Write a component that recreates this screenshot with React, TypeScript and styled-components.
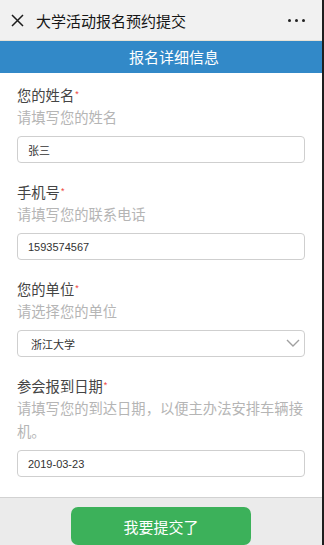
import styled, { createGlobalStyle } from 'styled-components'

const GlobalStyle = createGlobalStyle`
  * { box-sizing: border-box; }
  html, body {
    margin: 0;
    padding: 0;
    background: #ffffff;
  }
  body {
    font-family: "Liberation Sans", "Noto Sans CJK SC", sans-serif;
  }
`

interface IField {
  label: string;
  hint?: string;
  value?: string;
  kind?: 'text' | 'select';
}

const fields: IField[] = [
  { label: '您的姓名', hint: '请填写您的姓名', value: '张三' },
  { label: '手机号', hint: '请填写您的联系电话', value: '1593574567' },
  { label: '您的单位', hint: '请选择您的单位', value: '浙江大学', kind: 'select' },
  { label: '参会报到日期', hint: '请填写您的到达日期，以便主办法安排车辆接机。', value: '2019-03-23' },
  { label: '备注信息' },
]

const CloseIcon = () => (
  <svg width='13' height='13' viewBox='0 0 13 13'>
    <path d='M1 1 L12 12 M12 1 L1 12' stroke='#1c1c1c' strokeWidth='1.5' fill='none' />
  </svg>
)

const Chevron = () => (
  <svg width='14' height='8' viewBox='0 0 14 8'>
    <path d='M1 1 L7 7 L13 1' stroke='#a0a0a0' strokeWidth='1.4' fill='none' />
  </svg>
)

export default function App(): JSX.Element {
  return (<Page>
    <GlobalStyle />
    <Header>
      <CloseIcon />
      <Title>大学活动报名预约提交</Title>
      <Dots><i /><i /><i /></Dots>
    </Header>
    <Banner>报名详细信息</Banner>
    <Scroll>
      <Form>
        {fields.map((f) => (
          <Field key={f.label}>
            <Label>{f.label}<Star>*</Star></Label>
            {f.hint && <Hint>{f.hint}</Hint>}
            {f.value !== undefined && (f.kind === 'select'
              ? (<SelectWrap>
                <Input $select readOnly value={f.value} />
                <ChevronBox><Chevron /></ChevronBox>
              </SelectWrap>)
              : <Input readOnly value={f.value} />)}
          </Field>
        ))}
      </Form>
    </Scroll>
    <Footer>
      <Submit>我要提交了</Submit>
    </Footer>
  </Page>)
}

const Page = styled.div`
  height: 100vh;
  display: flex;
  flex-direction: column;
  border-right: 2px solid #1e1e1e;
  background: #ffffff;
  overflow: hidden;
`

const Header = styled.div`
  flex: none;
  height: 41px;
  display: flex;
  align-items: center;
  padding: 0 17px 0 11px;
  background: #f1f1f1;
  border-bottom: 1px solid #e6e1d6;
`

const Title = styled.div`
  margin-left: 12px;
  font-size: 15px;
  color: #161616;
  font-family: "Noto Sans CJK SC", sans-serif;
`

const Dots = styled.div`
  margin-left: auto;
  display: flex;
  gap: 4px;

  > i {
    width: 3px;
    height: 3px;
    border-radius: 50%;
    background: #222;
  }
`

const Banner = styled.div`
  flex: none;
  height: 32px;
  line-height: 32px;
  padding-left: 26px;
  text-align: center;
  background: #3289c8;
  color: #ffffff;
  font-size: 15px;
  font-family: "Noto Sans CJK SC", sans-serif;
`

const Scroll = styled.div`
  flex: 1;
  min-height: 0;
  overflow: hidden;
`

const Form = styled.div`
  padding: 11px 17px 0;
`

const Field = styled.div`
  margin-bottom: 18px;
`

const Label = styled.div`
  font-size: 14.3px;
  line-height: 20px;
  color: #444;
  font-family: "Noto Sans CJK SC", sans-serif;
`

const Star = styled.span`
  color: #ee3f3a;
  font-size: 9px;
  vertical-align: 4px;
  margin-left: 1px;
  font-family: "Liberation Sans", sans-serif;
`

const Hint = styled.div`
  font-size: 14.3px;
  line-height: 23px;
  color: #b5b5b5;
  font-family: "Noto Sans CJK SC", sans-serif;
`

const SelectWrap = styled.div`
  position: relative;
  margin-top: 8px;

  > input { margin-top: 0; }
`

const ChevronBox = styled.div`
  position: absolute;
  right: 5px;
  top: 9px;
  line-height: 0;
`

const Input = styled.input<{ $select?: boolean }>`
  display: block;
  width: 100%;
  height: 27px;
  margin-top: 8px;
  padding: 0 ${(p) => p.$select ? '26px 0 13px' : '10px'};
  border: 1px solid #cfcfcf;
  border-radius: 4px;
  background: #ffffff;
  color: #333;
  font-size: 11px;
  font-family: "Liberation Sans", "Noto Sans CJK SC", sans-serif;
  outline: none;
`

const Footer = styled.div`
  flex: none;
  height: 48px;
  padding-top: 9px;
  background: #ebebeb;
  border-top: 1px solid #d2d2d2;
`

const Submit = styled.button`
  display: block;
  width: 180px;
  height: 38px;
  margin: 0 auto;
  border: none;
  border-radius: 7px;
  background: #3cb15a;
  color: #ffffff;
  font-size: 15px;
  font-family: "Noto Sans CJK SC", sans-serif;
`
